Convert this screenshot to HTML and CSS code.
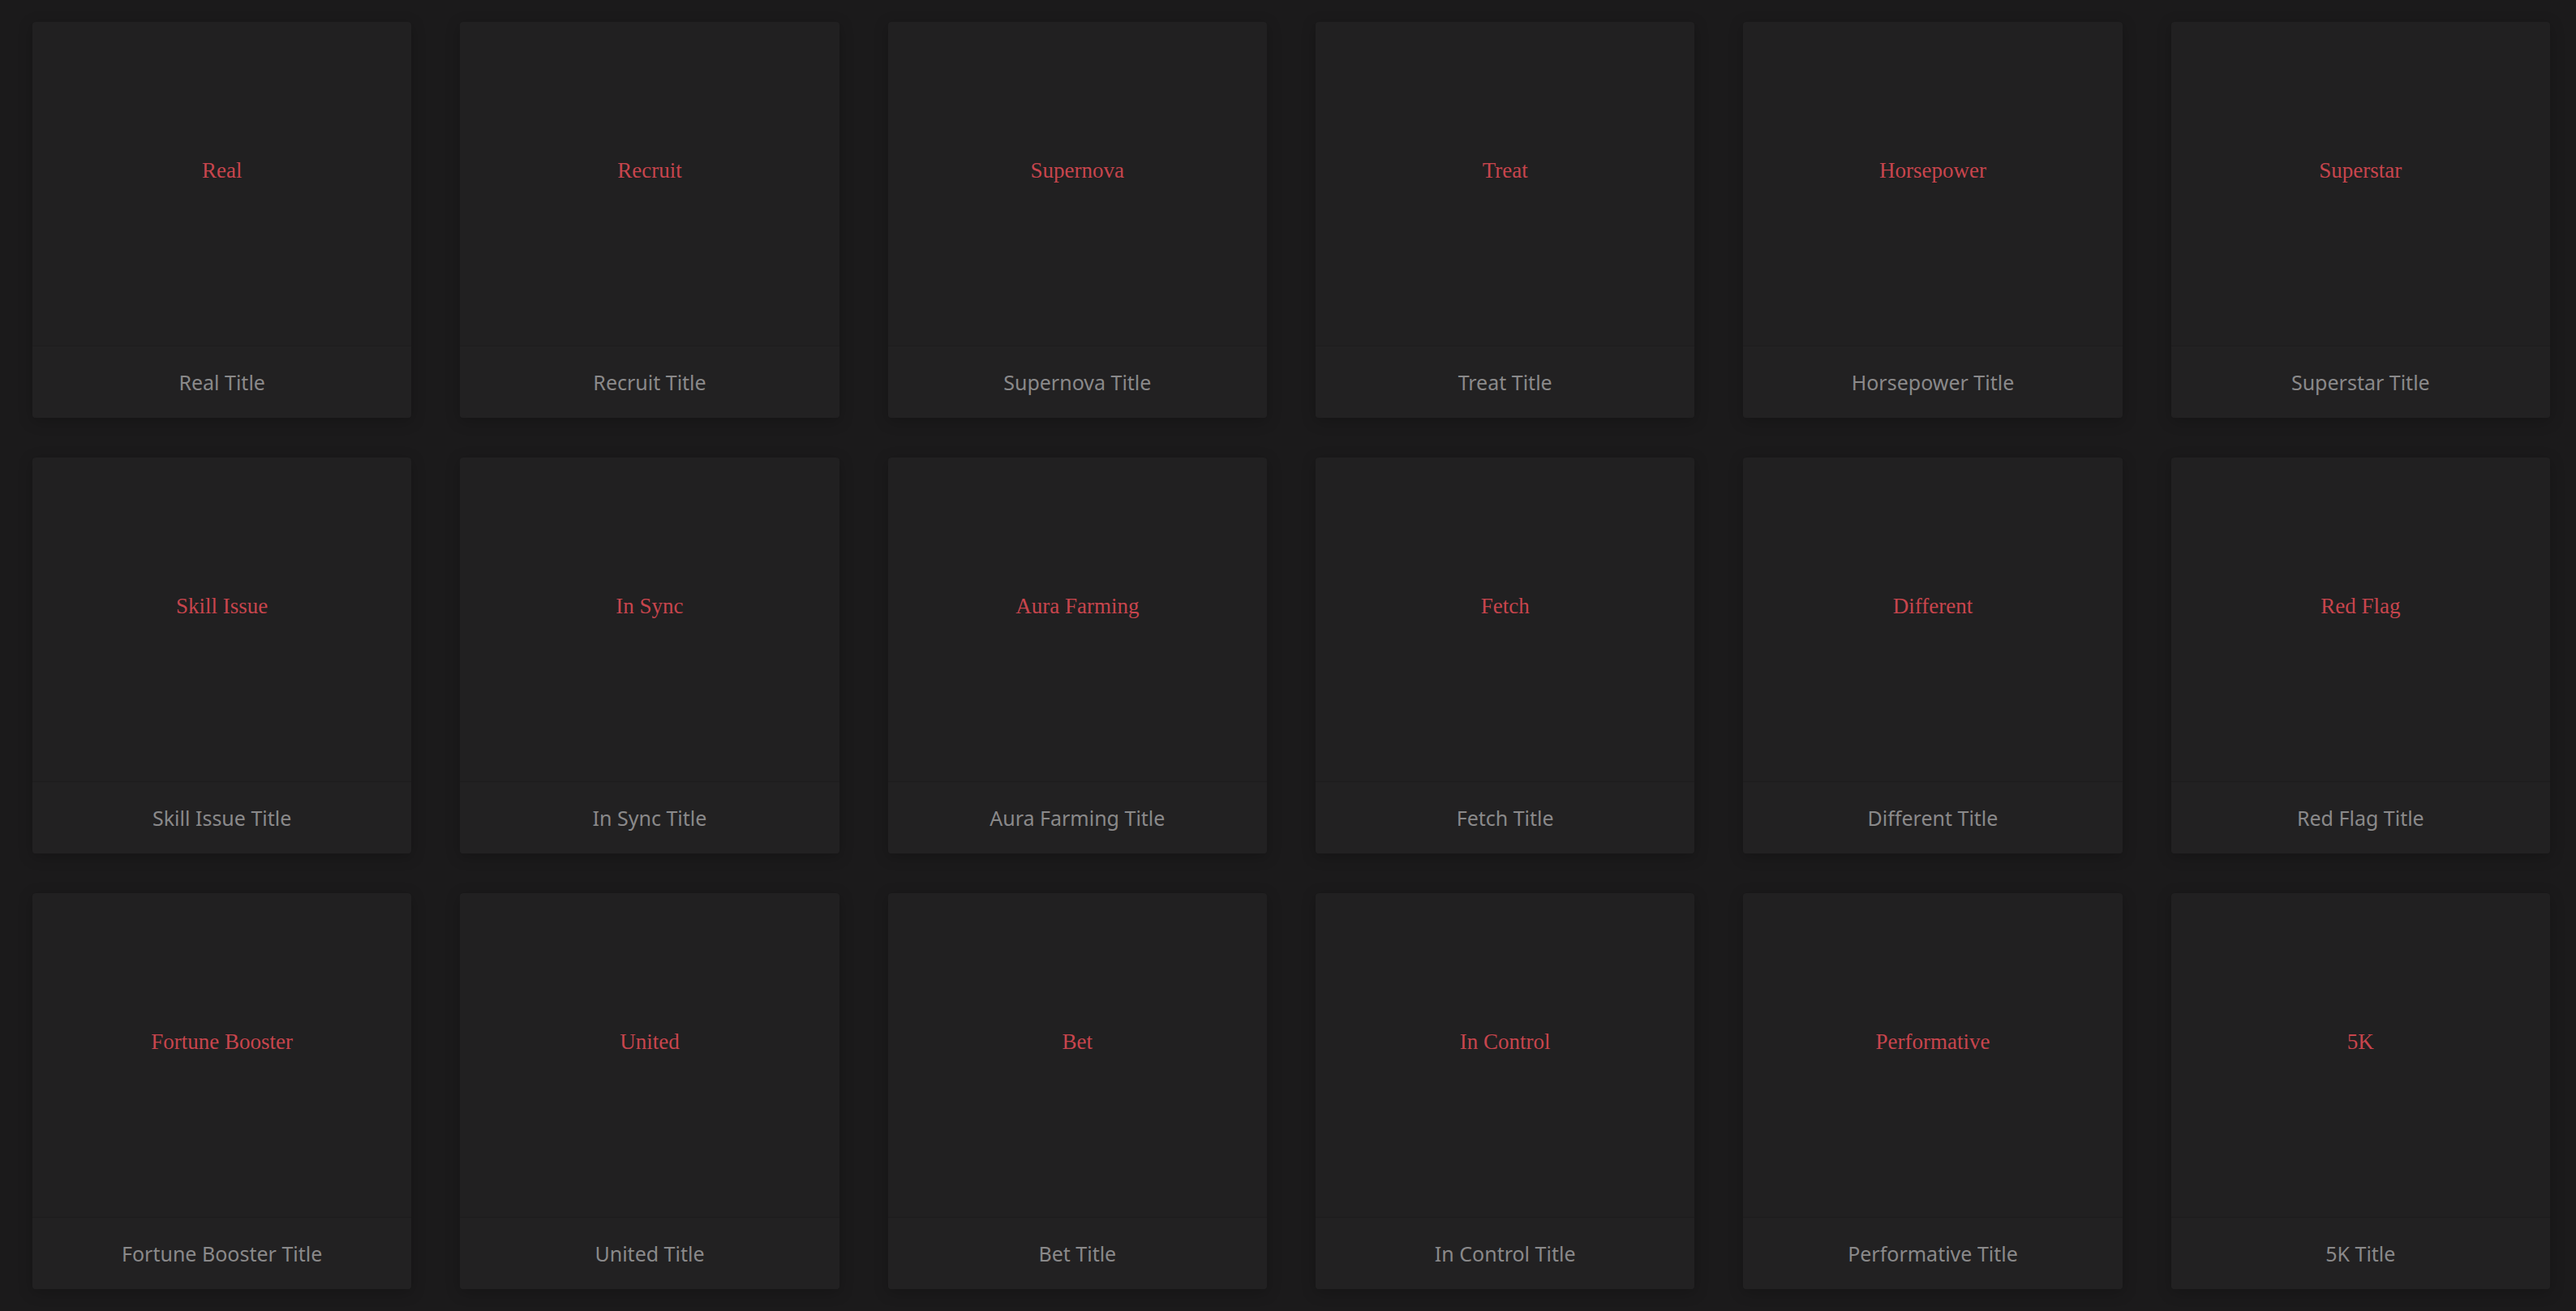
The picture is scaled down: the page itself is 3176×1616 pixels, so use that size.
FILE: index.html
```html
<!DOCTYPE html>
<html lang="en">
<head>
<meta charset="utf-8">
<title>Titles</title>
<link rel="stylesheet" href="styles.css">
</head>
<body>
<main class="grid">
  <article class="card"><div class="art"><span class="name">Real</span></div><div class="caption">Real Title</div></article>
  <article class="card"><div class="art"><span class="name">Recruit</span></div><div class="caption">Recruit Title</div></article>
  <article class="card"><div class="art"><span class="name">Supernova</span></div><div class="caption">Supernova Title</div></article>
  <article class="card"><div class="art"><span class="name">Treat</span></div><div class="caption">Treat Title</div></article>
  <article class="card"><div class="art"><span class="name">Horsepower</span></div><div class="caption">Horsepower Title</div></article>
  <article class="card"><div class="art"><span class="name">Superstar</span></div><div class="caption">Superstar Title</div></article>

  <article class="card"><div class="art"><span class="name">Skill Issue</span></div><div class="caption">Skill Issue Title</div></article>
  <article class="card"><div class="art"><span class="name">In Sync</span></div><div class="caption">In Sync Title</div></article>
  <article class="card"><div class="art"><span class="name">Aura Farming</span></div><div class="caption">Aura Farming Title</div></article>
  <article class="card"><div class="art"><span class="name">Fetch</span></div><div class="caption">Fetch Title</div></article>
  <article class="card"><div class="art"><span class="name">Different</span></div><div class="caption">Different Title</div></article>
  <article class="card"><div class="art"><span class="name">Red Flag</span></div><div class="caption">Red Flag Title</div></article>

  <article class="card"><div class="art"><span class="name">Fortune Booster</span></div><div class="caption">Fortune Booster Title</div></article>
  <article class="card"><div class="art"><span class="name">United</span></div><div class="caption">United Title</div></article>
  <article class="card"><div class="art"><span class="name">Bet</span></div><div class="caption">Bet Title</div></article>
  <article class="card"><div class="art"><span class="name">In Control</span></div><div class="caption">In Control Title</div></article>
  <article class="card"><div class="art"><span class="name">Performative</span></div><div class="caption">Performative Title</div></article>
  <article class="card"><div class="art"><span class="name">5K</span></div><div class="caption">5K Title</div></article>
</main>
</body>
</html>
```

FILE: styles.css
```css
html, body {
  margin: 0;
  padding: 0;
  background: #1b1a1b;
}

body {
  min-height: 100vh;
}

.grid {
  display: grid;
  grid-template-columns: repeat(6, 1fr);
  column-gap: 60px;
  row-gap: 49px;
  padding: 27px 32px 27px 40px;
}

.card {
  display: flex;
  flex-direction: column;
  height: 488px;
  background: #212021;
  border-radius: 4px;
  overflow: hidden;
  box-shadow: 0 4px 18px rgba(0, 0, 0, 0.22);
}

.art {
  height: 400px;
  box-sizing: border-box;
  padding-bottom: 32px;
  display: flex;
  align-items: center;
  justify-content: center;
  border-bottom: 1px solid #1d1c1d;
}

.name {
  font-family: "Liberation Serif", "Times New Roman", serif;
  font-size: 27px;
  color: #c8454d;
}

.caption {
  flex: 1;
  display: flex;
  align-items: center;
  justify-content: center;
  background: #222122;
  font-family: "Noto Sans", "Open Sans", sans-serif;
  font-size: 25px;
  color: #8a898a;
}
```
